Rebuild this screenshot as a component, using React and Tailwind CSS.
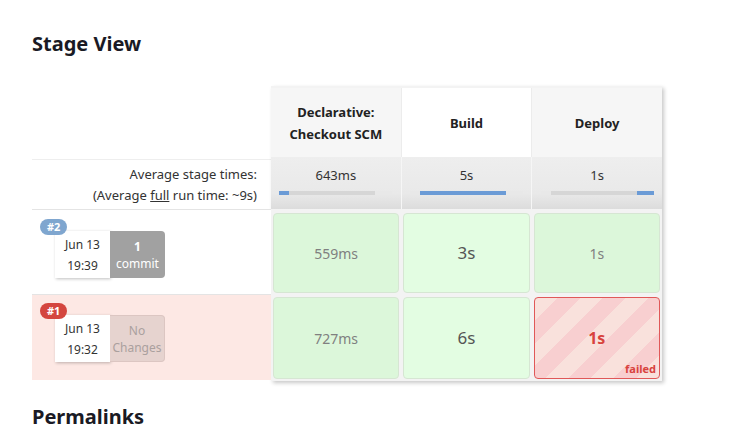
import React from 'react';

const font = { fontFamily: '"Noto Sans", "Open Sans", sans-serif' };

const stages = ['Declarative:\nCheckout SCM', 'Build', 'Deploy'];

const Bar = ({ light, blue }) => (
  <div className="relative mx-auto mt-[7px] h-[4px] w-[113px] bg-[#d6d6d6]">
    {light.map(([l, w], i) => (
      <div key={i} className="absolute top-0 h-full bg-[#e8e8e8]" style={{ left: l, width: w }} />
    ))}
    <div className="absolute top-0 h-full bg-[#6b9bd6]" style={{ left: blue[0], width: blue[1] }} />
  </div>
);

const GreenCell = ({ children, hover }) => (
  <div
    className={
      'm-[2px] flex flex-1 items-center justify-center rounded-[4px] border border-[#d6e6d3] ' +
      (hover ? 'bg-[#e3fde2] text-[17px] text-[#555]' : 'bg-[#dcf7da] text-[14px] text-[#808080]')
    }
  >
    {children}
  </div>
);

const DateBox = ({ date, time }) => (
  <div className="flex h-[47px] w-[55px] flex-col items-center justify-center bg-white text-[12px] leading-[21px] text-[#333] shadow-[1px_1px_3px_rgba(0,0,0,0.25)]">
    <span>{date}</span>
    <span>{time}</span>
  </div>
);

export default function App() {
  return (
    <div className="min-h-[436px] w-[729px] bg-white pl-[32px] text-[#333]" style={font}>
      <h2 className="pt-[30px] text-[20px] font-bold leading-[28px] text-[#1a1a24]">Stage View</h2>
      <div className="mt-[28px] flex">
        {/* left column */}
        <div className="flex w-[239px] flex-col">
          <div className="h-[73px]" />
          <div className="flex h-[50px] flex-col items-end justify-center border-t border-[#eeeeee] pr-[14px] text-[13px] leading-[21px] text-[#333]">
            <span>Average stage times:</span>
            <span>
              (Average <span className="underline">full</span> run time: ~9s)
            </span>
          </div>
          <div className="relative h-[86px] border-y border-[#e4e4e4] bg-white">
            <span className="absolute left-[8px] top-[9px] rounded-full bg-[#7fa6cf] px-[7px] text-[11px] font-bold leading-[16px] text-white">
              #2
            </span>
            <div className="ml-[23px] mt-[21px] flex">
              <DateBox date="Jun 13" time="19:39" />
              <div className="flex h-[47px] w-[55px] flex-col items-center justify-center rounded-r-[4px] bg-[#a1a1a1] text-[12px] leading-[17px] text-white">
                <span className="font-bold">1</span>
                <span>commit</span>
              </div>
            </div>
          </div>
          <div className="relative h-[85px] bg-[#fde8e4]">
            <span className="absolute left-[8px] top-[8px] rounded-full bg-[#d4463f] px-[7px] text-[11px] font-bold leading-[16px] text-white">
              #1
            </span>
            <div className="ml-[23px] mt-[20px] flex">
              <DateBox date="Jun 13" time="19:32" />
              <div className="flex h-[47px] w-[55px] flex-col items-center justify-center rounded-r-[4px] border border-l-0 border-[#dcc6c2] bg-[#e6d3cf] text-[12px] leading-[17px] text-[#aaa09e]">
                <span>No</span>
                <span>Changes</span>
              </div>
            </div>
          </div>
        </div>

        {/* stage table */}
        <div className="flex w-[391px] flex-col bg-[#f3f3f3] shadow-[2px_2px_4px_rgba(0,0,0,0.22)]">
          <div className="flex h-[71px] pt-[2px]">
            {stages.map((s, i) => (
              <div
                key={s}
                className={
                  'flex flex-1 items-center justify-center whitespace-pre-line border-r border-[#ececec] text-center text-[13px] font-bold leading-[22px] text-[#222] last:border-r-0 ' +
                  (i === 1 ? 'bg-white' : 'bg-[#f6f6f6]')
                }
              >
                {s}
              </div>
            ))}
          </div>
          <div className="flex h-[52px] bg-[linear-gradient(#eeeeee,#e9e9e9_70%,#dcdcdc)]">
            <div className="flex-1 border-r border-[#f6f6f6] pt-[10px] text-center text-[13px] leading-[17px]">
              643ms
              <Bar light={[[96, 17]]} blue={[0, 10]} />
            </div>
            <div className="flex-1 border-r border-[#f6f6f6] pt-[10px] text-center text-[13px] leading-[17px]">
              5s
              <Bar light={[[0, 10], [96, 17]]} blue={[10, 86]} />
            </div>
            <div className="flex-1 pt-[10px] text-center text-[13px] leading-[17px]">
              1s
              <Bar light={[[0, 10]]} blue={[96, 17]} />
            </div>
          </div>
          <div className="flex h-[86px] pt-[2px]">
            <GreenCell>559ms</GreenCell>
            <GreenCell hover>3s</GreenCell>
            <GreenCell>1s</GreenCell>
          </div>
          <div className="flex h-[86px]">
            <GreenCell>727ms</GreenCell>
            <GreenCell hover>6s</GreenCell>
            <div className="relative m-[2px] flex flex-1 items-center justify-center rounded-[4px] border border-[#e05858] bg-[repeating-linear-gradient(135deg,#f9e1dc_0,#f9e1dc_16px,#f8cfd0_16px,#f8cfd0_32px)] text-[16px] font-bold text-[#d8433e]">
              1s
              <span className="absolute bottom-[2px] right-[3px] text-[11px] font-bold leading-[14px]">failed</span>
            </div>
          </div>
        </div>
      </div>
      <h2 className="mt-[22px] text-[20px] font-bold leading-[28px] text-[#1a1a24]">Permalinks</h2>
    </div>
  );
}
